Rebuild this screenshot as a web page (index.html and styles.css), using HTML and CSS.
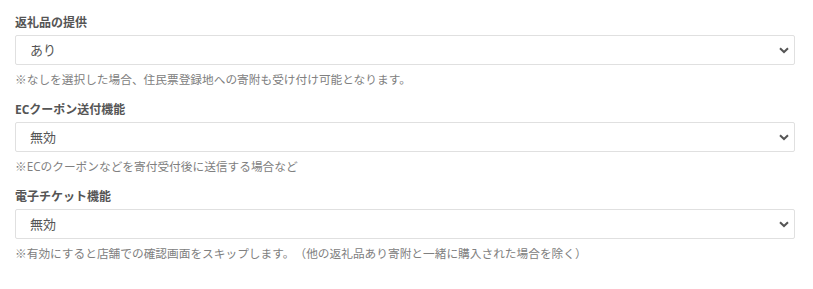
FILE: index.html
```html
<!DOCTYPE html>
<html lang="ja">
<head>
    <meta charset="UTF-8">
    <meta name="viewport" content="width=device-width, initial-scale=1.0">
    <title>寄附設定</title>
    <link rel="stylesheet" href="styles.css">
</head>
<body>
    <div class="form">
        <div class="form-group">
            <label class="form-label" for="gift">返礼品の提供</label>
            <div class="select-wrap">
                <select class="form-select" id="gift">
                    <option>あり</option>
                    <option>なし</option>
                </select>
                <svg class="chevron" width="10" height="7" viewBox="0 0 10 7"><path d="M1 1.2 L5 5 L9 1.2" fill="none" stroke="#555" stroke-width="2"/></svg>
            </div>
            <div class="form-help">※なしを選択した場合、住民票登録地への寄附も受け付け可能となります。</div>
        </div>

        <div class="form-group">
            <label class="form-label" for="coupon">ECクーポン送付機能</label>
            <div class="select-wrap">
                <select class="form-select" id="coupon">
                    <option>無効</option>
                    <option>有効</option>
                </select>
                <svg class="chevron" width="10" height="7" viewBox="0 0 10 7"><path d="M1 1.2 L5 5 L9 1.2" fill="none" stroke="#555" stroke-width="2"/></svg>
            </div>
            <div class="form-help">※ECのクーポンなどを寄付受付後に送信する場合など</div>
        </div>

        <div class="form-group">
            <label class="form-label" for="ticket">電子チケット機能</label>
            <div class="select-wrap">
                <select class="form-select" id="ticket">
                    <option>無効</option>
                    <option>有効</option>
                </select>
                <svg class="chevron" width="10" height="7" viewBox="0 0 10 7"><path d="M1 1.2 L5 5 L9 1.2" fill="none" stroke="#555" stroke-width="2"/></svg>
            </div>
            <div class="form-help">※有効にすると店舗での確認画面をスキップします。（他の返礼品あり寄附と一緒に購入された場合を除く）</div>
        </div>
    </div>
</body>
</html>
```

FILE: styles.css
```css
body {
    margin: 0;
    background: #fff;
    font-family: "Open Sans", "Noto Sans CJK JP", sans-serif;
    color: #555;
    text-spacing-trim: space-all;
}

.form {
    padding: 14px 18px 0 15px;
}

.form-group {
    margin-bottom: 13px;
}

.form-label {
    display: block;
    font-size: 12px;
    font-weight: bold;
    line-height: 18px;
    color: #555;
    margin-bottom: 3px;
}

.select-wrap {
    position: relative;
}

.form-select {
    display: block;
    width: 100%;
    height: 30px;
    box-sizing: border-box;
    border: 1px solid #e0e0e0;
    border-radius: 2px;
    background: #fff;
    padding: 0 30px 0 14px;
    font-family: inherit;
    font-size: 13px;
    color: #555;
    -webkit-appearance: none;
    appearance: none;
    outline: none;
}

.chevron {
    position: absolute;
    right: 6px;
    top: 12px;
    pointer-events: none;
}

.form-help {
    margin-top: 5px;
    font-size: 11.7px;
    line-height: 18px;
    color: #808080;
}
```
